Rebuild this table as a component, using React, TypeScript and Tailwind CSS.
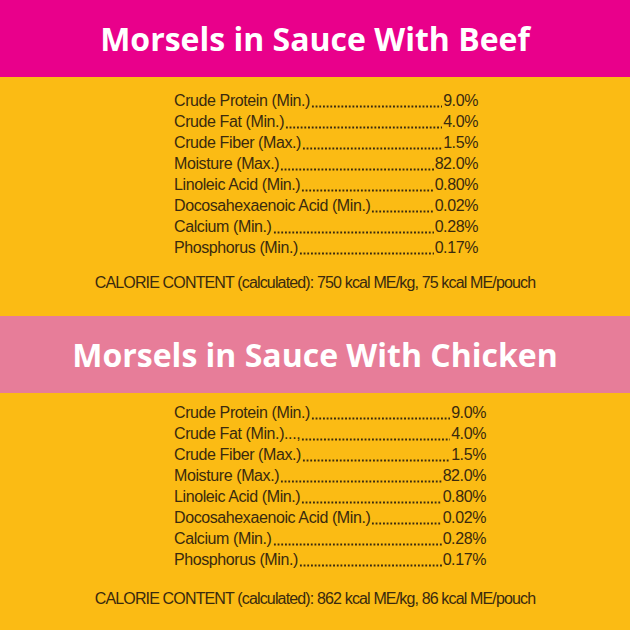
type Row = { label: string; value: string; lead?: string };

const beef: Row[] = [
  { label: "Crude Protein (Min.)", value: "9.0%" },
  { label: "Crude Fat (Min.)", value: "4.0%" },
  { label: "Crude Fiber (Max.)", value: "1.5%" },
  { label: "Moisture (Max.)", value: "82.0%" },
  { label: "Linoleic Acid (Min.)", value: "0.80%" },
  { label: "Docosahexaenoic Acid (Min.)", value: "0.02%" },
  { label: "Calcium (Min.)", value: "0.28%" },
  { label: "Phosphorus (Min.)", value: "0.17%" }
];

const chicken: Row[] = [
  { label: "Crude Protein (Min.)", value: "9.0%" },
  { label: "Crude Fat (Min.)", value: "4.0%", lead: "...," },
  { label: "Crude Fiber (Max.)", value: "1.5%" },
  { label: "Moisture (Max.)", value: "82.0%" },
  { label: "Linoleic Acid (Min.)", value: "0.80%" },
  { label: "Docosahexaenoic Acid (Min.)", value: "0.02%" },
  { label: "Calcium (Min.)", value: "0.28%" },
  { label: "Phosphorus (Min.)", value: "0.17%" }
];

const narrow = { fontFamily: '"Liberation Sans Narrow", "Arial Narrow", "Liberation Sans", sans-serif' };

const Analysis = ({ rows, width }: { rows: Row[]; width: string }) => (
  <div
    className={`ml-[174px] ${width} text-[16px] leading-[21px] tracking-[-0.4px] text-[#3a2a0e]`}
    style={narrow}
  >
    {rows.map((r) => (
      <div key={r.label} className="flex whitespace-nowrap">
        <span>{r.label}</span>
        {r.lead && <span>{r.lead}</span>}
        {/* dot leader */}
        <span className="flex-1 self-start mt-[15px] mx-[1px] h-[3px] bg-[radial-gradient(circle,#3a2a0e_0.9px,transparent_1.3px)] bg-[length:3.7px_3px] bg-repeat-x" />
        <span>{r.value}</span>
      </div>
    ))}
  </div>
);

const Title = ({ text, bg }: { text: string; bg: string }) => (
  <div className={`h-[77px] flex items-center justify-center ${bg}`}>
    <h1
      className="text-white text-[32px] font-bold"
      style={{ fontFamily: '"Open Sans", Lato, sans-serif' }}
    >
      {text}
    </h1>
  </div>
);

export default function App() {
  return (
    <div className="w-[630px] h-[630px] overflow-hidden bg-[#fbbb14]">
      <Title text="Morsels in Sauce With Beef" bg="bg-[#e9008b]" />
      <div className="pt-[13px] pb-[23px]">
        <Analysis rows={beef} width="w-[304px]" />
        <p
          className="mt-[14px] text-center text-[16px] leading-[21px] tracking-[-0.85px] text-[#3a2a0e]"
          style={narrow}
        >
          CALORIE CONTENT (calculated): 750 kcal ME/kg, 75 kcal ME/pouch
        </p>
      </div>
      <Title text="Morsels in Sauce With Chicken" bg="bg-[#e77d99]" />
      <div className="pt-[9px]">
        <Analysis rows={chicken} width="w-[312px]" />
        <p
          className="mt-[18px] text-center text-[16px] leading-[21px] tracking-[-0.85px] text-[#3a2a0e]"
          style={narrow}
        >
          CALORIE CONTENT (calculated): 862 kcal ME/kg, 86 kcal ME/pouch
        </p>
      </div>
    </div>
  );
}
